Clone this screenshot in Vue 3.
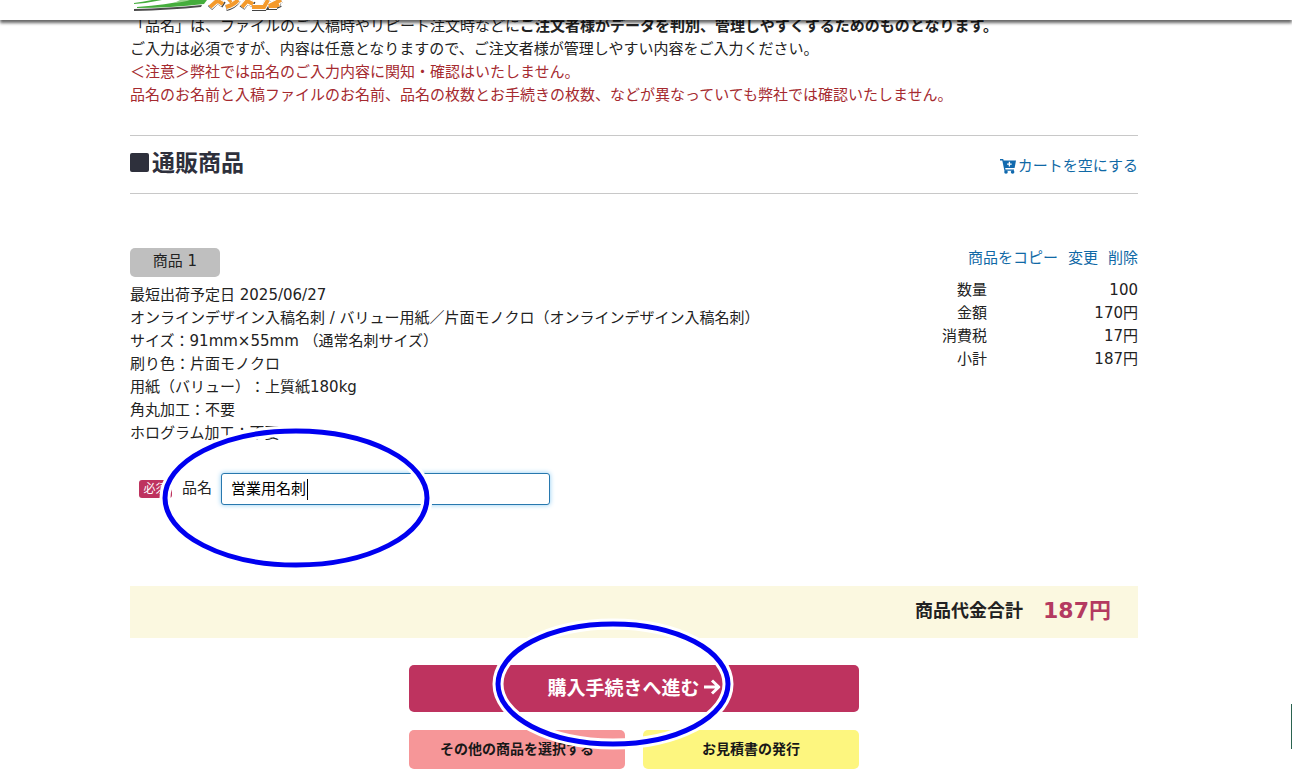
<script setup>
import { ref } from 'vue'

const productName = ref('営業用名刺')
const specs = [
  '最短出荷予定日 2025/06/27',
  'オンラインデザイン入稿名刺 / バリュー用紙／片面モノクロ（オンラインデザイン入稿名刺）',
  'サイズ：91mm×55mm （通常名刺サイズ）',
  '刷り色：片面モノクロ',
  '用紙（バリュー）：上質紙180kg',
  '角丸加工：不要',
  'ホログラム加工：不要',
]
const prices = [
  ['数量', '100'],
  ['金額', '170円'],
  ['消費税', '17円'],
  ['小計', '187円'],
]
</script>

<template>
  <div class="page">
    <header class="topbar">
      <svg class="logo" width="160" height="14" viewBox="0 0 160 14" aria-hidden="true">
        <path d="M4 9Q40 8 72 5L71 7Q40 10 4 11Z" fill="#4b4b4b" />
        <path d="M7 7Q36 5 58 0H77L74 4Q40 8 7 8Z" fill="#45ad3c" />
        <path d="M4 4Q18 3 32 0H22Q12 2 4 3Z" fill="#45ad3c" />
        <path d="M44 3Q54 2 60 0H50Z" fill="#9ad48f" />
        <path class="mark-shadow" d="M88 0L80 8M88 1L94 5M101 0L99 2M108 0Q104 6 96 8M118 0L112 8M117 1L124 5M122 8H134L138 0M151 0L139 7L147 7M146 2L149 8" />
        <path class="mark-edge" d="M88 0L80 7M88 1L93 4M101 0L99 2M108 0Q104 5 96 7M118 0L112 7M117 1L123 4M122 7H134L138 0M151 0L139 6L147 6M146 2L148 7" />
        <path class="mark" d="M88 0L80 7M88 1L93 4M101 0L99 2M108 0Q104 5 96 7M118 0L112 7M117 1L123 4M122 7H134L138 0M151 0L139 6L147 6M146 2L148 7" />
      </svg>
    </header>

    <main class="content">
      <p class="notes">
        「品名」は、ファイルのご入稿時やリピート注文時などに<b>ご注文者様がデータを判別、管理しやすくするためのものとなります。</b><br />
        ご入力は必須ですが、内容は任意となりますので、ご注文者様が管理しやすい内容をご入力ください。<br />
        <span class="warn">＜注意＞弊社では品名のご入力内容に関知・確認はいたしません。<br />
        品名のお名前と入稿ファイルのお名前、品名の枚数とお手続きの枚数、などが異なっていても弊社では確認いたしません。</span>
      </p>

      <div class="section-head">
        <h2><span class="square"></span>通販商品</h2>
        <a href="#" class="empty-cart">
          <svg width="16" height="15" viewBox="0 0 16 15" aria-hidden="true">
            <path d="M0 0H3.2L3.6 1.4H16L14.6 9H5.2L5.5 10.4H14V11.8H4.4L2.3 1.5H0Z" fill="#1069ae" />
            <circle cx="6" cy="13" r="1.8" fill="#1069ae" />
            <circle cx="12.6" cy="13" r="1.8" fill="#1069ae" />
            <path d="M9.4 2.8V7.4M7.1 5.1H11.7" stroke="#fff" stroke-width="1.3" />
          </svg>
          カートを空にする
        </a>
      </div>

      <section class="item">
        <div class="details">
          <div class="item-no">商品 1</div>
          <ul class="specs">
            <li v-for="s in specs" :key="s">{{ s }}</li>
          </ul>
        </div>
        <div class="side">
          <nav class="actions">
            <a href="#">商品をコピー</a>
            <a href="#">変更</a>
            <a href="#">削除</a>
          </nav>
          <table class="prices">
            <tbody>
              <tr v-for="[label, value] in prices" :key="label">
                <th scope="row">{{ label }}</th>
                <td>{{ value }}</td>
              </tr>
            </tbody>
          </table>
        </div>
      </section>

      <div class="name-row">
        <span class="required">必須</span>
        <label for="product-name">品名</label>
        <div class="field">
          <input id="product-name" v-model="productName" type="text" />
          <span class="caret"></span>
        </div>
        <svg class="ring ring-name" width="280" height="150" aria-hidden="true">
          <ellipse class="halo" cx="140" cy="75" rx="131" ry="67" />
          <ellipse class="line" cx="140" cy="75" rx="131" ry="67" />
        </svg>
      </div>

      <div class="total">
        <span class="total-label">商品代金合計</span>
        <strong>187円</strong>
      </div>

      <div class="buttons">
        <button type="button" class="proceed">
          購入手続きへ進む
          <svg width="18" height="16" viewBox="0 0 18 16" aria-hidden="true">
            <path d="M1 8H16M9 1.5L15.8 8L9 14.5" fill="none" stroke="#fff" stroke-width="3" stroke-linejoin="round" />
          </svg>
        </button>
        <button type="button" class="other">その他の商品を選択する</button>
        <button type="button" class="quote">お見積書の発行</button>
        <svg class="ring ring-proceed" width="250" height="140" aria-hidden="true">
          <ellipse class="halo" cx="125" cy="70" rx="115" ry="60" />
          <ellipse class="line" cx="125" cy="70" rx="115" ry="60" />
        </svg>
      </div>
    </main>
    <div class="side-tab"></div>
  </div>
</template>

<style>
body {
  background: #fff;
}
</style>

<style scoped>
.page {
  font-family: "DejaVu Sans", "Noto Sans CJK JP", sans-serif;
  font-size: 15px;
  line-height: 23px;
  text-spacing-trim: space-all;
  color: #222;
}
.topbar {
  position: fixed;
  inset: 0 0 auto;
  z-index: 5;
  height: 20px;
  padding: 0 130px;
  background: #fff;
  box-shadow: 0 3px 3px rgba(0, 0, 0, 0.6);
}
.logo {
  display: block;
}
.mark-shadow,
.mark-edge,
.mark {
  fill: none;
  stroke: #f49a2c;
  stroke-width: 4px;
}
.mark-shadow {
  stroke: #444;
  stroke-width: 6px;
}
.mark-edge {
  stroke: #fff;
  stroke-width: 6px;
}
.content {
  padding: 15px 154px 0 130px;
}
.notes {
  margin: 0 0 28px;
  white-space: nowrap;
}
.warn {
  color: #a52a2f;
}
.section-head {
  display: flex;
  align-items: center;
  justify-content: space-between;
  height: 57px;
  border-top: 1px solid #c8c8c8;
  border-bottom: 1px solid #c8c8c8;
}
h2 {
  display: flex;
  align-items: center;
  gap: 3px;
  margin: 0 0 4px;
  font-size: 23px;
  line-height: 32px;
  color: #2e303c;
}
.square {
  width: 19px;
  height: 19px;
  border-radius: 2px;
  background: #2e303c;
}
a {
  color: #1069a6;
  text-decoration: none;
}
.empty-cart {
  display: flex;
  align-items: center;
  gap: 2px;
  margin-top: 4px;
}
.item {
  display: flex;
  justify-content: space-between;
  margin-top: 53px;
}
.item-no {
  width: 90px;
  height: 29px;
  margin-top: 1px;
  border-radius: 5px;
  background: #bfbfbf;
  line-height: 26px;
  text-align: center;
}
.specs {
  margin: 7px 0 0;
  padding: 0;
  list-style: none;
  white-space: nowrap;
}
.actions {
  display: flex;
  justify-content: flex-end;
  gap: 10px;
  margin-bottom: 9px;
}
.prices {
  border-collapse: collapse;
  text-align: right;
}
.prices th,
.prices td {
  padding: 0;
  font-weight: 400;
  text-align: right;
}
.prices td {
  width: 151px;
}
.name-row {
  position: relative;
  display: flex;
  align-items: center;
  margin-top: 28px;
  padding-left: 9px;
}
.name-row label {
  padding-bottom: 2px;
}
.required {
  width: 33px;
  margin-right: 10px;
  border-radius: 3px;
  background: #be335f;
  color: #fff;
  font-size: 12px;
  line-height: 18px;
  text-align: center;
}
.field {
  position: relative;
  width: 329px;
  margin-left: 9px;
}
input {
  display: block;
  box-sizing: border-box;
  width: 100%;
  height: 32px;
  padding: 0 9px 3px;
  border: 1px solid #2878ae;
  border-radius: 3px;
  outline: none;
  background: #fff;
  box-shadow: 0 0 5px #8ccbf2;
  color: #000;
  font: inherit;
}
.caret {
  position: absolute;
  top: 6px;
  left: 86px;
  width: 1px;
  height: 21px;
  background: #000;
}
.ring {
  position: absolute;
  pointer-events: none;
}
.ring-name {
  top: -50px;
  left: 26px;
}
.ring-proceed {
  top: -51px;
  left: 79px;
}
.halo,
.line {
  fill: none;
  stroke: #fff;
  stroke-width: 11px;
}
.line {
  stroke: #0000f0;
  stroke-width: 5px;
}
.total {
  display: flex;
  box-sizing: border-box;
  align-items: center;
  justify-content: flex-end;
  gap: 20px;
  height: 52px;
  margin-top: 81px;
  padding: 0 27px 4px 0;
  background: #fbf8e0;
}
.total-label {
  font-size: 18px;
  font-weight: 700;
}
.total strong {
  color: #b43a60;
  font-size: 22px;
}
.buttons {
  position: relative;
  display: grid;
  grid-template-columns: 1fr 1fr;
  gap: 18px;
  width: 450px;
  margin: 27px auto 0;
}
button {
  height: 39px;
  padding: 0 0 4px;
  border: 0;
  border-radius: 5px;
  color: #181818;
  font: 700 14px "DejaVu Sans", "Noto Sans CJK JP", sans-serif;
}
.proceed {
  display: flex;
  grid-column: 1 / -1;
  align-items: center;
  justify-content: center;
  gap: 3px;
  height: 47px;
  background: #be335f;
  color: #fff;
  font-size: 19px;
}
.other {
  background: #f69698;
}
.quote {
  background: #fdf67f;
}
.side-tab {
  position: fixed;
  right: 0;
  bottom: 27px;
  width: 1px;
  height: 45px;
  background: #2b6350;
}
</style>
